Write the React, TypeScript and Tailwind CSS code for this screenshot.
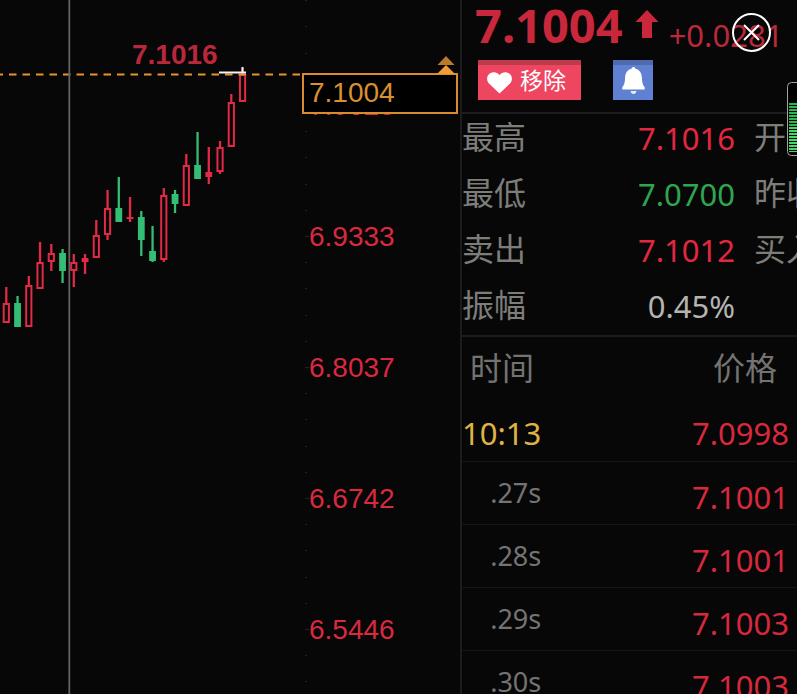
import { FunctionComponent } from "react";

interface candle {
    high: number,
    top: number,
    bottom: number,
    low: number,
    up: boolean
}

interface statRow {
    label: string,
    value: string,
    tone: string,
    next: string
}

const candles: candle[] = [
    { high: 287, top: 303, bottom: 323, low: 323, up: true },
    { high: 296, top: 303, bottom: 327, low: 327, up: false },
    { high: 276, top: 285, bottom: 327, low: 327, up: true },
    { high: 242, top: 262, bottom: 289, low: 289, up: true },
    { high: 244, top: 253, bottom: 262, low: 271, up: true },
    { high: 249, top: 253, bottom: 271, low: 283, up: false },
    { high: 254, top: 262, bottom: 271, low: 287, up: true },
    { high: 254, top: 258, bottom: 262, low: 274, up: true },
    { high: 220, top: 235, bottom: 258, low: 258, up: true },
    { high: 190, top: 208, bottom: 235, low: 240, up: true },
    { high: 177, top: 208, bottom: 222, low: 222, up: false },
    { high: 197, top: 217, bottom: 219, low: 222, up: true },
    { high: 211, top: 217, bottom: 240, low: 256, up: false },
    { high: 226, top: 251, bottom: 261, low: 262, up: false },
    { high: 188, top: 195, bottom: 260, low: 262, up: true },
    { high: 190, top: 194, bottom: 204, low: 213, up: false },
    { high: 154, top: 165, bottom: 206, low: 206, up: true },
    { high: 132, top: 165, bottom: 179, low: 179, up: false },
    { high: 147, top: 172, bottom: 177, low: 184, up: true },
    { high: 141, top: 147, bottom: 172, low: 174, up: true },
    { high: 94, top: 102, bottom: 147, low: 147, up: true },
    { high: 68, top: 74, bottom: 102, low: 102, up: true },
];

// the first tick sits above the visible range
const ticks = ["", "7.0628", "6.9333", "6.8037", "6.6742", "6.5446"];

const stats: statRow[] = [
    { label: "最高", value: "7.1016", tone: "text-[#e2283f]", next: "开盘" },
    { label: "最低", value: "7.0700", tone: "text-[#2fa552]", next: "昨收" },
    { label: "卖出", value: "7.1012", tone: "text-[#e2283f]", next: "买入" },
    { label: "振幅", value: "0.45%", tone: "text-[#b4b4b0]", next: "" },
];

const trades = [
    { time: "10:13", price: "7.0998", minute: true },
    { time: ".27s", price: "7.1001", minute: false },
    { time: ".28s", price: "7.1001", minute: false },
    { time: ".29s", price: "7.1003", minute: false },
    { time: ".30s", price: "7.1003", minute: false },
];

const Candle: FunctionComponent<candle & { x: number }> = ({ x, high, top, bottom, low, up }) => {
    const color = up ? "#e22a45" : "#34bd74";
    const hollow = up && bottom - top > 6;

    return (
        <g stroke={color} strokeWidth={2.3}>
            <line x1={x} x2={x} y1={high} y2={top} />
            <line x1={x} x2={x} y1={bottom} y2={low} />
            {hollow
                ? <rect x={x - 2.6} y={top + 1} width={5.2} height={bottom - top - 2} fill="none" strokeWidth={2} />
                : <rect x={x - 3.4} y={top} width={6.8} height={bottom - top} fill={color} stroke="none" />}
        </g>
    );
}

const Chart: FunctionComponent = () => {
    return (
        <section className="flex justify-end overflow-hidden">
            <svg width="302" height="694" viewBox="0 0 302 694" className="shrink-0">
                {candles.map((item, i) => (
                    <Candle key={i} x={6.3 + i * 11.25} {...item} />
                ))}
                <line x1="-4.5" x2="302" y1="74.5" y2="74.5" stroke="#e8932f" strokeWidth="2" strokeDasharray="7.5 6" />
                <path d="M219 72.5H246M242.5 67V73" fill="none" stroke="#f4f4f4" strokeWidth="2" />
                <line x1="69.3" x2="69.3" y1="0" y2="694" stroke="#636363" strokeWidth="1.8" />
                <text x="132" y="64" fontSize="28" fontWeight="bold" fill="#b9283a" fontFamily="Liberation Sans, Arial, sans-serif">7.1016</text>
            </svg>
        </section>
    );
}

const PriceAxis: FunctionComponent = () => {
    return (
        <section className="relative overflow-hidden font-['Liberation_Sans',Arial,sans-serif] text-[28px] text-[#d8293f]">
            <div className="-mt-[91px]">
                {ticks.map((tick, i) => (
                    <div className="flex h-[131px] items-center" key={i}>
                        <svg width="7" height="131" className="shrink-0" fill="#222">
                            <rect x="3" y="13" width="2" height="1" />
                            <rect x="3" y="39" width="2" height="1" />
                            <rect x="3" y="65" width="4" height="1" />
                            <rect x="3" y="91" width="2" height="1" />
                            <rect x="3" y="117" width="2" height="1" />
                        </svg>
                        {tick}
                    </div>
                ))}
            </div>

            {/* current price marker */}
            <div className="absolute inset-x-0 top-14 mr-[2px]">
                <svg width="18" height="18" className="ml-auto mr-[3px]">
                    <path d="M9 0L17.5 9H.5Z" fill="#b97a2d" />
                    <path d="M9 9L18 18H0Z" fill="#f29b36" />
                </svg>
                <div className="-mt-px flex h-[41px] items-center border-2 border-[#db8a2f] bg-black pb-px pl-[5px] text-[#d9902f]">
                    7.1004
                </div>
            </div>
        </section>
    );
}

const QuoteHeader: FunctionComponent = () => {
    return (
        <header className="h-[114px] border-b-2 border-[#1c1c1c] pl-4">
            <div className="flex h-[60px] items-start whitespace-nowrap">
                <h1 className="-ml-[3px] text-[47px] font-bold leading-[50px] text-[#c9283c]">7.1004</h1>
                <svg width="24" height="29" className="mt-[10px] ml-3 shrink-0" fill="#c9283c">
                    <path d="M12 0L23.5 12H17V28H7V12H.5Z" />
                </svg>
                <span className="ml-[10px] pt-[10px] text-[31px] leading-[50px] text-[#b9293b]">+0.0281</span>
            </div>

            <div className="flex gap-8">
                <button className="flex h-10 w-[103px] items-center gap-2 border-t-[5px] border-[#bb3a4c] bg-[#ee4560] pl-[9px] text-[23px] leading-none text-white">
                    <svg width="25" height="22" viewBox="0 0 25 22" fill="white" className="shrink-0">
                        <path d="M12.5 3.2C10-.2 5.500-.5 2.500 1.800C-.8 4.500-.5 9 2 11.600L12.500 21.500L23 11.600C25.500 9 25.800 4.500 22.500 1.800C19.500-.5 15 -.2 12.500 3.200Z" />
                    </svg>
                    <span className="pb-1">移除</span>
                </button>
                <button aria-label="提醒" className="flex h-10 w-10 justify-center border-t-[5px] border-[#4f6bad] bg-[#6080d4] pt-[2px]">
                    <svg width="23" height="28" viewBox="0 0 23 28" fill="white">
                        <path d="M11.500 0C12.600 0 13.300.7 13.400 1.800C17.500 2.700 19.700 6 19.900 10.500C20.100 15.500 20.600 17.700 22.700 20.300V22.500H.3V20.300C2.400 17.700 2.900 15.500 3.100 10.500C3.300 6 5.500 2.700 9.600 1.800C9.700.7 10.400 0 11.500 0Z" />
                        <path d="M8.500 24H14.500C14.200 25.800 13 27 11.500 27S8.800 25.800 8.500 24Z" opacity=".85" />
                    </svg>
                </button>
            </div>
        </header>
    );
}

const Stats: FunctionComponent = () => {
    return (
        <dl className="flex flex-col gap-2 pb-[5px] text-[32px] text-[#7d7d7a]">
            {stats.map((row) => (
                <div className="flex h-12 items-center whitespace-nowrap" key={row.label}>
                    <dt className="pb-[2px]">{row.label}</dt>
                    <dd className={`flex-1 text-right text-[31px] ${row.tone}`}>{row.value}</dd>
                    <dt className="ml-[19px] w-[43px] pb-[2px]">{row.next}</dt>
                </div>
            ))}
        </dl>
    );
}

const Trades: FunctionComponent = () => {
    return (
        <table className="w-full border-t-2 border-[#1c1c1c] text-right text-[31px]">
            <thead>
                <tr className="h-[62px] text-[32px] text-[#737371]">
                    <th className="w-20 px-2 text-left font-normal leading-none whitespace-nowrap">时间</th>
                    <th className="pr-5 font-normal leading-none">价格</th>
                </tr>
            </thead>
            <tbody>
                {trades.map((trade, i) => (
                    <tr className="h-[63px] border-b border-[#151515] leading-10" key={i}>
                        <td className={trade.minute ? "pt-2 pr-px text-[#e0b345]" : "pr-px text-[27px] text-[#747472]"}>{trade.time}</td>
                        <td className="pt-2 pr-2 text-[#d8283e]">{trade.price}</td>
                    </tr>
                ))}
            </tbody>
        </table>
    );
}

const App: FunctionComponent = () => {
    return (
        <main className="relative grid h-screen grid-cols-[302fr_158fr_337fr] overflow-hidden bg-[#070707] font-['Noto_Sans','Noto_Sans_CJK_SC',sans-serif]">
            <Chart />
            <PriceAxis />

            <section className="overflow-hidden border-l-2 border-[#1c1c1c]">
                <QuoteHeader />
                <Stats />
                <Trades />
            </section>

            <button aria-label="关闭" className="absolute right-[26px] top-[13px]">
                <svg width="39" height="39" fill="none" stroke="white" strokeWidth="2">
                    <circle cx="19.5" cy="19.5" r="18.5" />
                    <path d="M12 12L27 27M27 12L12 27" />
                </svg>
            </button>

            {/* level meter, tucked against the window edge */}
            <svg width="10" height="75" className="absolute right-0 top-[82px]">
                <rect x=".5" y=".5" width="20" height="73" rx="4" fill="#000" stroke="#a3a3a3" />
                {Array.from({ length: 17 }, (_, i) => (
                    <rect key={i} x="2" y={21 + i * 3} width="8" height={i === 16 ? 1 : 2} fill={i < 8 ? "#25b84f" : "#43d765"} />
                ))}
            </svg>
        </main>
    );
}

export default App;
